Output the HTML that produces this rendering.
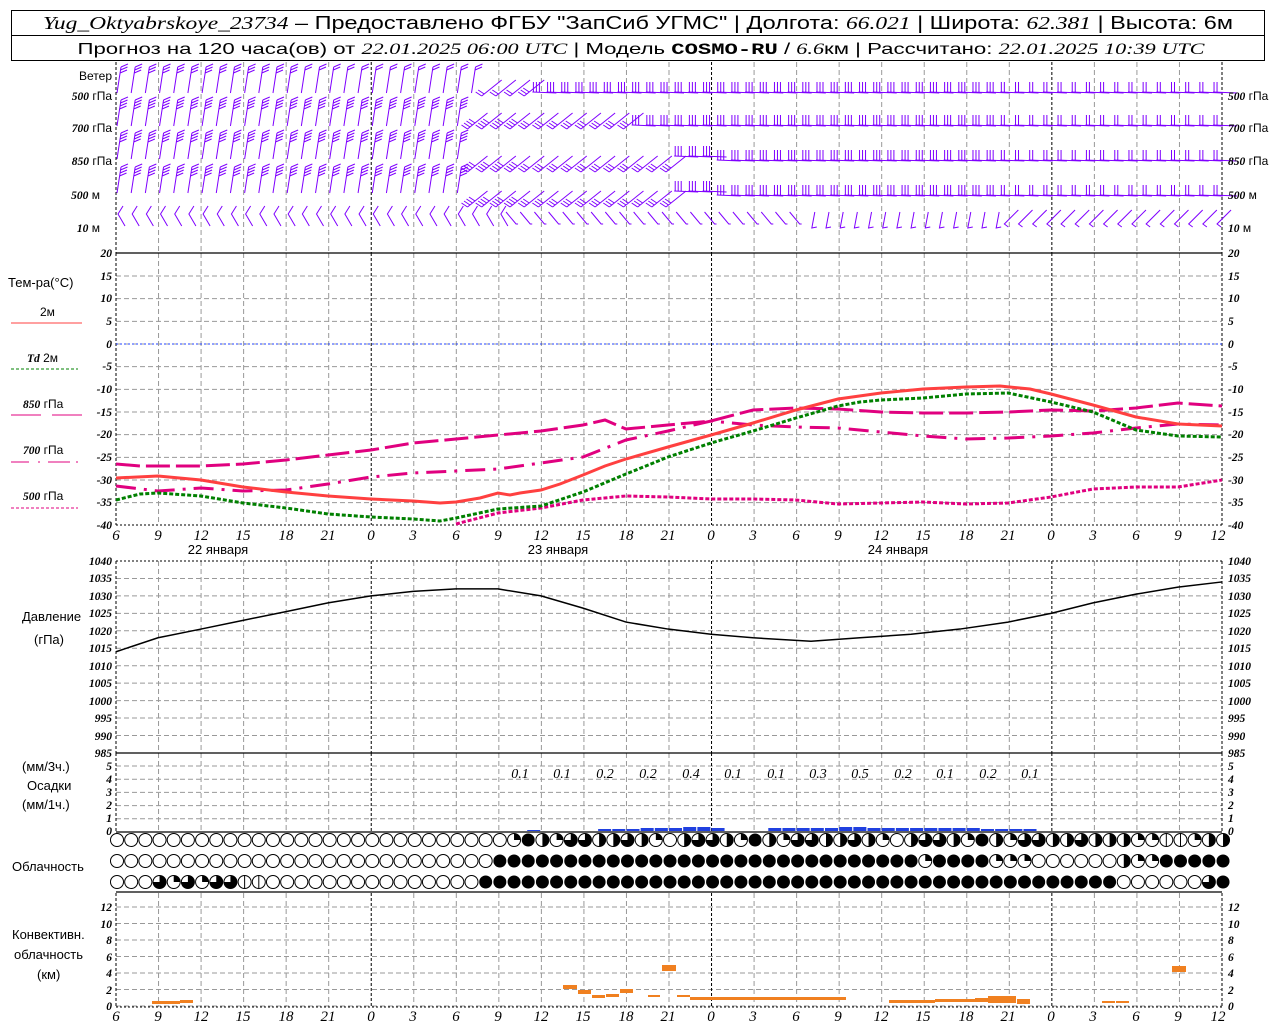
<!DOCTYPE html>
<html><head><meta charset="utf-8"><style>
html,body{margin:0;padding:0;background:#fff;width:1280px;height:1024px;overflow:hidden}
svg{display:block;font-family:"Liberation Sans",sans-serif}
.ax{font-family:"Liberation Serif",serif;font-style:italic;font-size:11.5px;font-weight:bold}
.hr{font-family:"Liberation Serif",serif;font-style:italic;font-size:15px}
.pn{font-family:"Liberation Serif",serif;font-style:italic;font-size:14px}
</style></head><body>
<svg id="s" width="1280" height="1024" viewBox="0 0 1280 1024" xmlns="http://www.w3.org/2000/svg">
<rect x="11.5" y="10.5" width="1253" height="50" fill="none" stroke="#000"/>
<line x1="11" y1="35.5" x2="1265" y2="35.5" stroke="#000"/>
<text x="638" y="29" font-size="18" text-anchor="middle" textLength="1190" lengthAdjust="spacingAndGlyphs"><tspan font-family="Liberation Serif" font-style="italic">Yug_Oktyabrskoye_23734</tspan> – Предоставлено ФГБУ "ЗапСиб УГМС" | Долгота: <tspan font-family="Liberation Serif" font-style="italic">66.021</tspan> | Широта: <tspan font-family="Liberation Serif" font-style="italic">62.381</tspan> | Высота: 6м</text>
<text x="641" y="54" font-size="16" text-anchor="middle" textLength="1127" lengthAdjust="spacingAndGlyphs">Прогноз на 120 часа(ов) от <tspan font-family="Liberation Serif" font-style="italic">22.01.2025 06:00 UTC</tspan> | Модель <tspan font-weight="bold" font-family="Liberation Mono">COSMO-RU</tspan> / <tspan font-family="Liberation Serif" font-style="italic">6.6</tspan>км | Рассчитано: <tspan font-family="Liberation Serif" font-style="italic">22.01.2025 10:39 UTC</tspan></text>
<g id="grid"></g>
<g id="wind" stroke="#7f00ff" stroke-width="1" fill="none"></g>
<g font-size="12">
<text x="112" y="80" text-anchor="end">Ветер</text>
<text x="112" y="100" text-anchor="end"><tspan class="ax">500</tspan> гПа</text>
<text x="112" y="132" text-anchor="end"><tspan class="ax">700</tspan> гПа</text>
<text x="112" y="165" text-anchor="end"><tspan class="ax">850</tspan> гПа</text>
<text x="100" y="199" text-anchor="end"><tspan class="ax">500</tspan> м</text>
<text x="100" y="232" text-anchor="end"><tspan class="ax">10</tspan>  м</text>
<text x="1228" y="100"><tspan class="ax">500</tspan> гПа</text>
<text x="1228" y="132"><tspan class="ax">700</tspan> гПа</text>
<text x="1228" y="165"><tspan class="ax">850</tspan> гПа</text>
<text x="1228" y="199"><tspan class="ax">500</tspan> м</text>
<text x="1228" y="232"><tspan class="ax">10</tspan>  м</text>
</g>
<g font-size="13">
<text x="8" y="287">Тем-ра(°C)</text>
<text x="40" y="316" font-size="12">2м</text>
<line x1="11" y1="323" x2="82" y2="323" stroke="#ff4040"/>
<text x="27" y="362" font-size="12"><tspan class="ax">Td</tspan>  2м</text>
<line x1="11" y1="369" x2="78" y2="369" stroke="#008000" stroke-dasharray="3,2"/>
<text x="23" y="408" font-size="12"><tspan class="ax">850</tspan> гПа</text>
<path d="M11 415H41M52 415H82" stroke="#e0007f"/>
<text x="23" y="454" font-size="12"><tspan class="ax">700</tspan> гПа</text>
<path d="M11 462H29M38 462H40M48 462H70M76 462H78" stroke="#e0007f"/>
<text x="23" y="500" font-size="12"><tspan class="ax">500</tspan> гПа</text>
<line x1="11" y1="508" x2="78" y2="508" stroke="#e0007f" stroke-dasharray="3,2"/>
</g>
<g class="ax" text-anchor="end">
<text x="112" y="257">20</text><text x="112" y="280">15</text><text x="112" y="302">10</text><text x="112" y="325">5</text><text x="112" y="348">0</text><text x="112" y="370">-5</text><text x="112" y="393">-10</text><text x="112" y="416">-15</text><text x="112" y="438">-20</text><text x="112" y="461">-25</text><text x="112" y="484">-30</text><text x="112" y="506">-35</text><text x="112" y="529">-40</text>
</g>
<g class="ax">
<text x="1228" y="257">20</text><text x="1228" y="280">15</text><text x="1228" y="302">10</text><text x="1228" y="325">5</text><text x="1228" y="348">0</text><text x="1228" y="370">-5</text><text x="1228" y="393">-10</text><text x="1228" y="416">-15</text><text x="1228" y="438">-20</text><text x="1228" y="461">-25</text><text x="1228" y="484">-30</text><text x="1228" y="506">-35</text><text x="1228" y="529">-40</text>
</g>
<g class="hr" text-anchor="middle">
<text x="116" y="540">6</text><text x="158" y="540">9</text><text x="201" y="540">12</text><text x="243" y="540">15</text><text x="286" y="540">18</text><text x="328" y="540">21</text><text x="371" y="540">0</text><text x="413" y="540">3</text><text x="456" y="540">6</text><text x="498" y="540">9</text><text x="541" y="540">12</text><text x="583" y="540">15</text><text x="626" y="540">18</text><text x="668" y="540">21</text><text x="711" y="540">0</text><text x="753" y="540">3</text><text x="796" y="540">6</text><text x="838" y="540">9</text><text x="881" y="540">12</text><text x="923" y="540">15</text><text x="966" y="540">18</text><text x="1008" y="540">21</text><text x="1051" y="540">0</text><text x="1093" y="540">3</text><text x="1136" y="540">6</text><text x="1178" y="540">9</text><text x="1218" y="540">12</text>
</g>
<g font-size="13" text-anchor="middle">
<text x="218" y="554">22 января</text><text x="558" y="554">23 января</text><text x="898" y="554">24 января</text>
</g>
<g class="ax" text-anchor="end">
<text x="112" y="565">1040</text><text x="112" y="582">1035</text><text x="112" y="600">1030</text><text x="112" y="617">1025</text><text x="112" y="635">1020</text><text x="112" y="652">1015</text><text x="112" y="670">1010</text><text x="112" y="687">1005</text><text x="112" y="705">1000</text><text x="112" y="722">995</text><text x="112" y="740">990</text><text x="112" y="757">985</text>
</g>
<g class="ax">
<text x="1228" y="565">1040</text><text x="1228" y="582">1035</text><text x="1228" y="600">1030</text><text x="1228" y="617">1025</text><text x="1228" y="635">1020</text><text x="1228" y="652">1015</text><text x="1228" y="670">1010</text><text x="1228" y="687">1005</text><text x="1228" y="705">1000</text><text x="1228" y="722">995</text><text x="1228" y="740">990</text><text x="1228" y="757">985</text>
</g>
<text x="22" y="621" font-size="13">Давление</text>
<text x="34" y="644" font-size="13">(гПа)</text>
<g font-size="13"><text x="22" y="771">(мм/3ч.)</text><text x="27" y="790">Осадки</text><text x="22" y="809">(мм/1ч.)</text></g>
<g class="ax" text-anchor="end"><text x="112" y="770">5</text><text x="112" y="783">4</text><text x="112" y="796">3</text><text x="112" y="809">2</text><text x="112" y="822">1</text><text x="112" y="835">0</text></g>
<g class="ax"><text x="1228" y="770">5</text><text x="1228" y="783">4</text><text x="1228" y="796">3</text><text x="1228" y="809">2</text><text x="1228" y="822">1</text><text x="1228" y="835">0</text></g>
<g class="pn" text-anchor="middle">
<text x="520" y="778">0.1</text><text x="562" y="778">0.1</text><text x="605" y="778">0.2</text><text x="648" y="778">0.2</text><text x="691" y="778">0.4</text><text x="733" y="778">0.1</text><text x="776" y="778">0.1</text><text x="818" y="778">0.3</text><text x="860" y="778">0.5</text><text x="903" y="778">0.2</text><text x="945" y="778">0.1</text><text x="988" y="778">0.2</text><text x="1030" y="778">0.1</text>
</g>
<text x="12" y="871" font-size="13">Облачность</text>
<g font-size="13"><text x="12" y="939">Конвективн.</text><text x="14" y="959">облачность</text><text x="37" y="979">(км)</text></g>
<g class="ax" text-anchor="end"><text x="112" y="911">12</text><text x="112" y="928">10</text><text x="112" y="944">8</text><text x="112" y="961">6</text><text x="112" y="977">4</text><text x="112" y="994">2</text><text x="112" y="1010">0</text></g>
<g class="ax"><text x="1228" y="911">12</text><text x="1228" y="928">10</text><text x="1228" y="944">8</text><text x="1228" y="961">6</text><text x="1228" y="977">4</text><text x="1228" y="994">2</text><text x="1228" y="1010">0</text></g>
<g class="hr" text-anchor="middle">
<text x="116" y="1021">6</text><text x="158" y="1021">9</text><text x="201" y="1021">12</text><text x="243" y="1021">15</text><text x="286" y="1021">18</text><text x="328" y="1021">21</text><text x="371" y="1021">0</text><text x="413" y="1021">3</text><text x="456" y="1021">6</text><text x="498" y="1021">9</text><text x="541" y="1021">12</text><text x="583" y="1021">15</text><text x="626" y="1021">18</text><text x="668" y="1021">21</text><text x="711" y="1021">0</text><text x="753" y="1021">3</text><text x="796" y="1021">6</text><text x="838" y="1021">9</text><text x="881" y="1021">12</text><text x="923" y="1021">15</text><text x="966" y="1021">18</text><text x="1008" y="1021">21</text><text x="1051" y="1021">0</text><text x="1093" y="1021">3</text><text x="1136" y="1021">6</text><text x="1178" y="1021">9</text><text x="1218" y="1021">12</text>
</g>
<line x1="116" y1="344" x2="1222" y2="344" stroke="#2040ff" stroke-dasharray="2,2"/>
<polyline fill="none" stroke="#e0007f" stroke-width="3" stroke-dasharray="24,6" points="116,464 140,466 201,466 243,464 286,460 328,455 371,450 413,443 456,439 498,435 541,431 583,425 605,420 626,429 668,425 711,421 753,410 796,408 838,409 881,412 923,413 966,413 1008,412 1051,410 1093,411 1136,408 1178,403 1222,406"/>
<polyline fill="none" stroke="#e0007f" stroke-width="3" stroke-dasharray="20,8,3,8" points="116,486 158,491 201,488 243,491 286,490 328,484 371,477 413,473 456,471 498,469 541,463 583,457 626,440 668,431 711,421 753,425 796,427 838,428 881,432 923,436 966,439 1008,438 1051,436 1093,433 1136,428 1178,424 1222,425"/>
<polyline fill="none" stroke="#e0007f" stroke-width="3" stroke-dasharray="4,2" points="456,524 498,513 541,508 583,500 626,496 668,497 711,499 753,499 796,500 838,504 881,503 923,502 966,504 1008,503 1051,497 1093,489 1136,487 1178,487 1222,480"/>
<polyline fill="none" stroke="#ff4040" stroke-width="3" points="116,478 158,476 201,480 243,487 286,492 328,496 371,499 413,501 440,503 456,502 480,498 498,493 510,495 520,493 541,490 560,484 583,475 605,466 626,459 668,447 711,435 753,423 796,410 838,399 881,393 923,389 966,387 1000,386 1030,389 1051,394 1093,405 1136,417 1178,424 1222,426"/>
<polyline fill="none" stroke="#008000" stroke-width="3" stroke-dasharray="4,2" points="116,500 140,494 158,493 201,496 243,503 286,508 328,514 371,517 413,519 440,521 456,518 498,509 541,506 583,492 626,474 668,457 711,443 753,431 796,418 838,406 860,402 881,400 923,398 966,394 1008,393 1051,402 1093,412 1136,430 1178,436 1222,437"/>
<polyline id="pres" fill="none" stroke="#000" stroke-width="1.5"/>
<g id="pr" fill="#2040e0"></g>
<g id="cl"></g>
<g fill="#f08020">
<rect x="152" y="1001" width="28" height="3"/><rect x="180" y="1000" width="13" height="3"/>
<rect x="563" y="985" width="14" height="4"/><rect x="578" y="990" width="13" height="4"/><rect x="592" y="995" width="13" height="3"/><rect x="606" y="994" width="13" height="3"/><rect x="620" y="989" width="13" height="4"/><rect x="648" y="995" width="12" height="2"/>
<rect x="662" y="965" width="14" height="6"/><rect x="677" y="995" width="13" height="2"/>
<rect x="690" y="997" width="156" height="3"/>
<rect x="889" y="1000" width="46" height="3"/><rect x="935" y="999" width="40" height="3"/>
<rect x="975" y="998" width="13" height="4"/><rect x="988" y="996" width="28" height="7"/><rect x="1017" y="999" width="13" height="5"/>
<rect x="1102" y="1001" width="13" height="2"/><rect x="1116" y="1001" width="13" height="2"/>
<rect x="1172" y="966" width="14" height="6"/>
</g>
</svg>
<script>
var NS="http://www.w3.org/2000/svg";
function el(p,t,a){var e=document.createElementNS(NS,t);for(var k in a)e.setAttribute(k,a[k]);p.appendChild(e);return e;}
var g=document.getElementById('grid');
var X=[];for(var i=0;i<27;i++)X.push(116+i*1106/26);
function hg(y0,y1,step){for(var y=y0;y<=y1+0.1;y+=step)el(g,'line',{x1:116,x2:1222,y1:y,y2:y,stroke:'#999','stroke-dasharray':'5,3'});}
hg(276,525,22.667);hg(578.45,753,17.45);hg(766,819,13.2);hg(907,1007,16.5);
var panels=[[62,253],[253,525],[561,753],[753,832],[893,1007]];
panels.forEach(function(p){X.forEach(function(x,i){var mid=(i%8==6)||i==0||i==26;
el(g,'line',{x1:x,x2:x,y1:p[0],y2:p[1],stroke:mid?'#000':'#999','stroke-dasharray':mid?'3,2':'5,3'});});
});
[253,753,832,892].forEach(function(y){el(g,'line',{x1:116,x2:1222,y1:y,y2:y,stroke:'#000','stroke-width':1.2});});
[525,561,1007].forEach(function(y){el(g,'line',{x1:116,x2:1222,y1:y,y2:y,stroke:'#000','stroke-dasharray':'2,2'});});
var pp=[[116,1014],[158,1018],[201,1020.5],[243,1023],[286,1025.5],[328,1028],[371,1030],[413,1031.3],[456,1032],[498,1032],[541,1030],[583,1026.5],[626,1022.5],[668,1020.5],[711,1019],[753,1018],[811,1017],[860,1018],[911,1019],[960,1020.5],[1008,1022.5],[1051,1025],[1093,1028],[1136,1030.5],[1178,1032.5],[1222,1034]];
document.getElementById('pres').setAttribute('points',pp.map(function(p){return p[0]+','+(561+(1040-p[1])*3.49)}).join(' '));
var pr=document.getElementById('pr');
for(var i=0;i<78;i++){var x=116+i*14.18;var h=0;
if(x>=584&&x<640)h=2;else if(x>=640&&x<725)h=(x>675&&x<700)?4:3;else if(x>=768&&x<1035)h=(x>830&&x<860)?4:(x>980?2:3);else if(x>=527&&x<540)h=1;
if(h)el(pr,'rect',{x:x,y:831-h,width:13,height:h});}
var cl=document.getElementById('cl');
function circ(cx,cy,t){var r=6.5;
if(t==8){el(cl,'circle',{cx:cx,cy:cy,r:r,fill:'#000'});return;}
el(cl,'circle',{cx:cx,cy:cy,r:r,fill:'#fff',stroke:'#000','stroke-width':1});
if(t==0)return;
if(t==4){el(cl,'path',{d:'M'+cx+' '+(cy-r)+'A'+r+' '+r+' 0 0 1 '+cx+' '+(cy+r)+'Z',fill:'#000'});return;}
if(t==2){el(cl,'path',{d:'M'+cx+' '+cy+'L'+cx+' '+(cy-r)+'A'+r+' '+r+' 0 0 1 '+(cx+r)+' '+cy+'Z',fill:'#000'});return;}
if(t==6){el(cl,'path',{d:'M'+cx+' '+cy+'L'+cx+' '+(cy-r)+'A'+r+' '+r+' 0 1 1 '+(cx-r)+' '+cy+'Z',fill:'#000'});return;}
if(t==1){el(cl,'line',{x1:cx,x2:cx,y1:cy-r,y2:cy+r,stroke:'#000'});return;}}
for(var i=0;i<79;i++){var x=117+i*14.18;
var a=0,b=0,c=0;
if(x>505&&x<1100){a=[6,6,4,4,6,4,2,0,4,6,6,4,2,8,4,2][i%16];}
if(x>1100)a=[2,2,1,1,2,4,4,4][i%8];
if(x>498&&x<1010)b=8;if(x>912&&x<930)b=2;if(x>985&&x<1010)b=2;if(x>=1010&&x<1025)b=2;
if(x>1118)b=[4,2,2,8,8,8,8,8][Math.min(7,Math.round((x-1118)/14.18))];
if(x>480&&x<1110)c=8;if(x>=1110&&x<1122)c=1;if(x>1200)c=6;if(x>1215)c=8;
if(x>150&&x<240)c=[6,2,6,6,2][i%5];if(x>=240&&x<270)c=1;
circ(x,840,a);circ(x,861,b);circ(x,882,c);}
var w=document.getElementById('wind');
var rows=[93,126,159,193,226];
var hStart=[540,630,680,680];
var hY=[92,125,160,195];
var dStart=[480,470,470,470];
rows.forEach(function(yb,r){
for(var i=0;i<79;i++){var x=117+i*14.18;var d='';
var n=r==4?1:(x<520?(r==0&&x>300?2:(r==0?3:4)):(x>1000?2:3));
if(r==4){
 if(x<500){d='M'+(x+8)+' '+yb+'l-7 -12l5 -8';}
 else if(x<800){d='M'+(x-8)+' '+(yb-14)+'l10 12l2 0';}
 else if(x<1000){d='M'+(x+3)+' '+(yb-14)+'l-3 16l5 -1';}
 else {d='M'+(x+8)+' '+(yb-16)+'l-14 14l4 3';}
}
else if(x>=hStart[r]){var y2=hY[r]+(x<800?(r>=2?(x<720?-4:0):0):0);
 d='M'+(x-10)+' '+y2+'L'+(x+14)+' '+(y2+1);
 for(var k=0;k<n;k++)d+='M'+(x-9+k*3)+' '+y2+'l0 -10';}
else if(x>=dStart[r]){var yy=hY[r]+(r>=2?8:0);
 d='M'+(x-4)+' '+(yy+4)+'L'+(x+16)+' '+(yy-12);
 for(var k=0;k<n;k++)d+='M'+(x-4+k*2.5)+' '+(yy+4-k*2)+'l-6 -4';}
else {var tx=x+4,ty=yb-26;d='M'+x+' '+yb+'L'+tx+' '+ty;for(var k=0;k<n;k++){var fy=ty+k*3,fx=tx-k*0.5;d+='M'+fx+' '+fy+'l7 -3';}}
el(w,'path',{d:d});}
});
</script>
</body></html>
